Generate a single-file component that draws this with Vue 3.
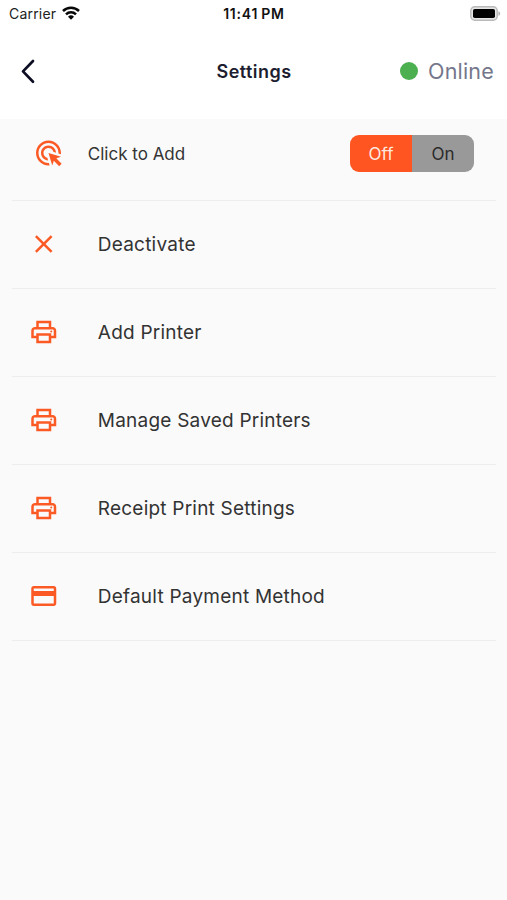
<script setup>
const items = [
  { label: 'Deactivate', icon: 'close' },
  { label: 'Add Printer', icon: 'print' },
  { label: 'Manage Saved Printers', icon: 'print' },
  { label: 'Receipt Print Settings', icon: 'print' },
  { label: 'Default Payment Method', icon: 'card' },
]
const paths = {
  close: 'M19 6.41 17.59 5 12 10.59 6.41 5 5 6.41 10.59 12 5 17.59 6.41 19 12 13.41 17.59 19 19 17.59 13.41 12z',
  print: 'M19 8h-1V3H6v5H5c-1.66 0-3 1.34-3 3v6h4v4h12v-4h4v-6c0-1.66-1.34-3-3-3zM8 5h8v3H8V5zm8 12v2H8v-4h8v2zm2-2v-2H6v2H4v-4c0-.55.45-1 1-1h14c.55 0 1 .45 1 1v4h-2zM18 10.7a.8.8 0 1 0 0 1.6.8.8 0 0 0 0-1.6z',
  card: 'M20 4H4c-1.11 0-1.99.89-1.99 2L2 18c0 1.11.89 2 2 2h16c1.11 0 2-.89 2-2V6c0-1.11-.89-2-2-2zm0 14H4v-6h16v6zm0-10H4V6h16v2z',
}
</script>

<template>
  <div class="screen">
    <div class="status">
      <div class="carrier">
        <span>Carrier</span>
        <svg class="wifi" viewBox="0 0 18 14">
          <g fill="none" stroke="#080808" stroke-width="2.5">
            <path d="M1 5a11.4 11.4 0 0 1 16 0" />
            <path d="M4 8.4a7.1 7.1 0 0 1 10 0" />
          </g>
          <path d="M6 10.7a4.3 4.3 0 0 1 6 0L9 13.8z" fill="#080808" />
        </svg>
      </div>
      <span class="clock">11:41 PM</span>
      <svg class="battery" viewBox="0 0 31 15">
        <rect x=".8" y=".8" width="26.4" height="13.4" rx="4" fill="#e6e6e6" stroke="#bababa" stroke-width="1.5" />
        <rect x="3" y="3" width="22" height="9" rx="1.8" fill="#000" />
        <path d="M28.4 5.2c2.4.8 2.4 3.8 0 4.6z" fill="#b4b4b4" />
      </svg>
    </div>

    <header class="bar">
      <svg class="back" viewBox="0 0 16 26">
        <path d="M13 3 3 13.4l10 10.4" fill="none" stroke="#0d0d24" stroke-width="2.7" stroke-linecap="round" stroke-linejoin="round" />
      </svg>
      <h1 class="title">Settings</h1>
      <div class="online"><i class="dot"></i><span>Online</span></div>
    </header>

    <main class="list">
      <div class="row toggle-row">
        <svg class="icon" viewBox=".4 0 24 24">
          <path d="M11.71 17.99C8.53 17.84 6 15.22 6 12c0-3.31 2.69-6 6-6 3.22 0 5.84 2.53 5.99 5.71l-2.1-.63C15.48 9.31 13.89 8 12 8c-2.21 0-4 1.79-4 4 0 1.89 1.31 3.48 3.08 3.89l.63 2.1zM22 12c0 .3-.01.6-.04.9l-1.97-.59c.01-.1.01-.21.01-.31 0-4.42-3.58-8-8-8s-8 3.58-8 8 3.58 8 8 8c.1 0 .21 0 .31-.01l.59 1.97c-.3.03-.6.04-.9.04C6.48 22 2 17.52 2 12S6.48 2 12 2s10 4.48 10 10zm-3.77 4.26L22 15l-10-3 3 10 1.26-3.77 4.27 4.27 1.98-1.98-4.28-4.26z" />
        </svg>
        <span class="toggle-label">Click to Add</span>
        <div class="switch">
          <span class="off">Off</span>
          <span class="on">On</span>
        </div>
      </div>
      <div v-for="item in items" :key="item.label" class="row">
        <svg class="icon" viewBox=".2 0 24 24"><path :d="paths[item.icon]" /></svg>
        <span class="label">{{ item.label }}</span>
      </div>
    </main>
  </div>
</template>

<style>
body { margin: 0; background: #fafafa; }
</style>

<style scoped>
.screen {
  width: 507px;
  height: 900px;
  overflow: hidden;
  background: #fafafa;
  font-family: Inter, "Liberation Sans", sans-serif;
  color: #333;
  white-space: nowrap;
}
.status {
  display: grid;
  grid-template-columns: 1fr auto 1fr;
  align-items: center;
  height: 27px;
  padding: 0 6px 0 7px;
  box-sizing: border-box;
  background: #fff;
}
.carrier { display: flex; align-items: center; gap: 6px; padding-left: 2px; font-size: 14px; letter-spacing: .2px; color: #222; }
.wifi { width: 18px; height: 14px; margin-top: -2px; }
.clock { font-size: 14px; font-weight: 600; letter-spacing: .75px; word-spacing: -1px; color: #111; }
.battery { width: 31px; height: 15px; justify-self: end; margin-top: -1px; }
.bar {
  display: grid;
  grid-template-columns: 1fr auto 1fr;
  align-items: center;
  height: 92px;
  padding: 0 13px 4px 20px;
  box-sizing: border-box;
  background: #fff;
}
.back { width: 16px; height: 26px; }
.title { margin: 2px 6px 0 0; font-size: 18px; line-height: 24px; font-weight: 600; letter-spacing: .45px; color: #1d1d30; }
.online { display: flex; align-items: center; justify-self: end; gap: 10px; font-size: 21.5px; letter-spacing: .2px; color: #74778c; }
.dot { width: 18px; height: 18px; border-radius: 50%; background: #4caf50; }
.list { padding: 0 11px 0 12px; }
.row {
  display: flex;
  align-items: center;
  height: 88px;
  padding-left: 17px;
  box-sizing: border-box;
  border-bottom: 1px solid #ededed;
}
.toggle-row { height: 82px; padding: 0 22px 12px 22px; }
.icon { width: 30px; height: 30px; flex: none; margin: 0 0 1px; fill: #fb5a24; }
.label { margin-left: 38.8px; font-size: 19px; letter-spacing: .22px; }
.toggle-label { margin-left: 23.8px; font-size: 17px; }
.switch { display: flex; width: 124px; height: 37px; margin-left: auto; border-radius: 9px; overflow: hidden; font-size: 17px; }
.off, .on { flex: 1; display: flex; align-items: center; justify-content: center; }
.off { background: #ff5521; color: #ffe9df; }
.on { background: #999; color: #292929; }
</style>
